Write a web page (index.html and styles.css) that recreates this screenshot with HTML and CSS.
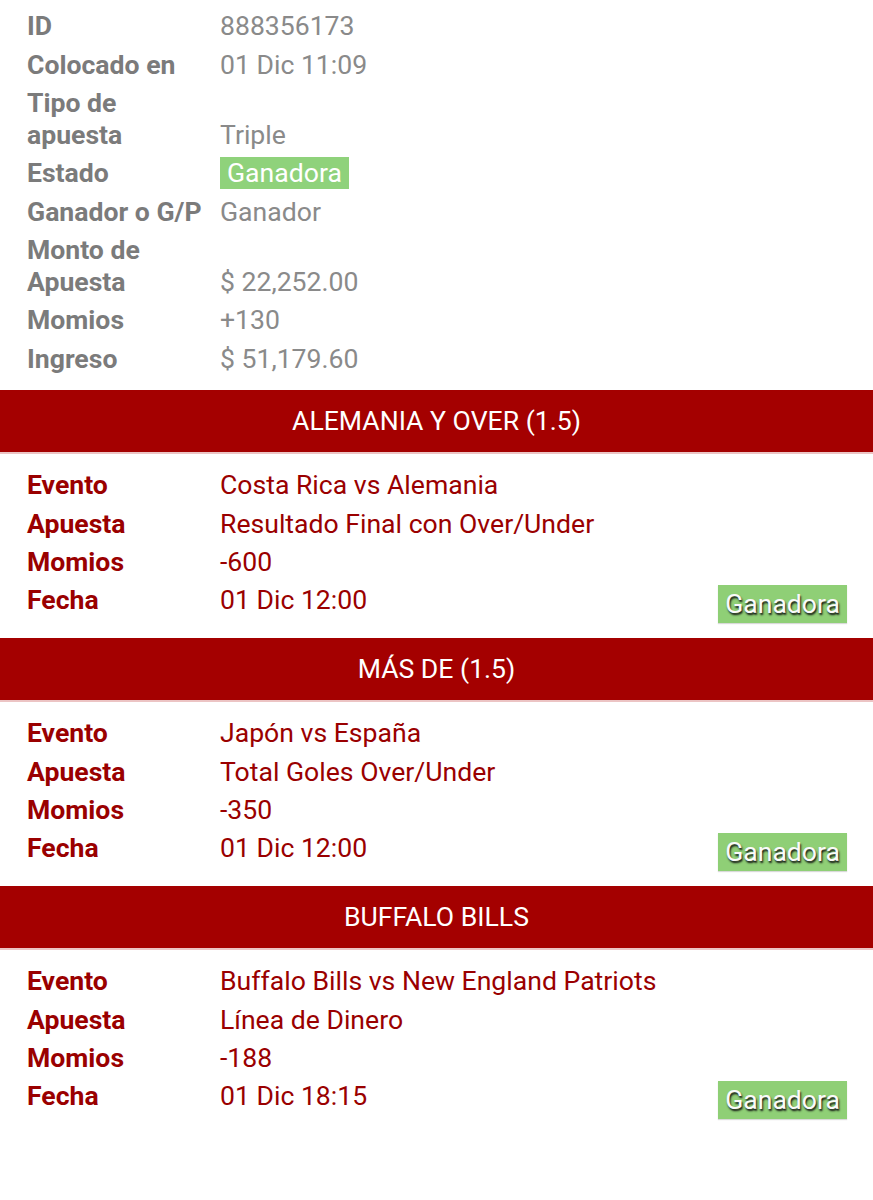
FILE: index.html
```html
<!DOCTYPE html>
<html lang="es">
<head>
    <meta charset="UTF-8">
    <meta name="viewport" content="width=device-width, initial-scale=1.0">
    <title>Detalle de Apuesta</title>
    <link rel="stylesheet" href="styles.css">
</head>
<body>

    <!-- Resumen de la apuesta -->
    <div class="resumen">
        <table class="detalle">
            <tr><td class="label">ID</td><td>888356173</td></tr>
            <tr><td class="label">Colocado en</td><td>01 Dic 11:09</td></tr>
            <tr><td class="label">Tipo de apuesta</td><td>Triple</td></tr>
            <tr><td class="label">Estado</td><td><span class="estado">Ganadora</span></td></tr>
            <tr><td class="label">Ganador o G/P</td><td>Ganador</td></tr>
            <tr><td class="label">Monto de Apuesta</td><td>$ 22,252.00</td></tr>
            <tr><td class="label">Momios</td><td>+130</td></tr>
            <tr><td class="label">Ingreso</td><td>$ 51,179.60</td></tr>
        </table>
    </div>

    <!-- Selecciones -->
    <div class="seleccion">
        <div class="seleccion-titulo">ALEMANIA Y OVER (1.5)</div>
        <div class="seleccion-cuerpo">
            <table class="detalle rojo">
                <tr><td class="label">Evento</td><td>Costa Rica vs Alemania</td></tr>
                <tr><td class="label">Apuesta</td><td>Resultado Final con Over/Under</td></tr>
                <tr><td class="label">Momios</td><td>-600</td></tr>
                <tr><td class="label">Fecha</td><td>01 Dic 12:00</td></tr>
            </table>
            <span class="resultado">Ganadora</span>
        </div>
    </div>

    <div class="seleccion">
        <div class="seleccion-titulo">MÁS DE (1.5)</div>
        <div class="seleccion-cuerpo">
            <table class="detalle rojo">
                <tr><td class="label">Evento</td><td>Japón vs España</td></tr>
                <tr><td class="label">Apuesta</td><td>Total Goles Over/Under</td></tr>
                <tr><td class="label">Momios</td><td>-350</td></tr>
                <tr><td class="label">Fecha</td><td>01 Dic 12:00</td></tr>
            </table>
            <span class="resultado">Ganadora</span>
        </div>
    </div>

    <div class="seleccion">
        <div class="seleccion-titulo">BUFFALO BILLS</div>
        <div class="seleccion-cuerpo">
            <table class="detalle rojo">
                <tr><td class="label">Evento</td><td>Buffalo Bills vs New England Patriots</td></tr>
                <tr><td class="label">Apuesta</td><td>Línea de Dinero</td></tr>
                <tr><td class="label">Momios</td><td>-188</td></tr>
                <tr><td class="label">Fecha</td><td>01 Dic 18:15</td></tr>
            </table>
            <span class="resultado">Ganadora</span>
        </div>
    </div>

</body>
</html>
```
FILE: styles.css
```css
body {
    font-family: Roboto, "Liberation Sans", Arial, sans-serif;
    font-size: 26.6px;
    margin: 0;
    background-color: #fff;
    color: #8a8a8a;
}

.resumen {
    padding: 7px 27px 12px 27px;
}

.detalle {
    border-collapse: collapse;
}

.detalle td {
    padding: 3.2px 0;
    line-height: 32px;
    vertical-align: bottom;
}

.detalle td.label {
    width: 180px;
    padding-right: 13px;
    font-weight: bold;
    color: #7b7b7b;
}

.estado {
    display: inline-block;
    padding: 0 7px;
    background-color: #8fd27b;
    color: #fff;
}

.seleccion-titulo {
    height: 62px;
    line-height: 62px;
    text-align: center;
    color: #fff;
    background-color: #a40000;
    border-bottom: 2px solid #ecc4c4;
}

.seleccion-cuerpo {
    display: flex;
    justify-content: space-between;
    align-items: flex-end;
    padding: 12px 26px 18.5px 27px;
}

.detalle.rojo td,
.detalle.rojo td.label {
    color: #9a0000;
}

.resultado {
    display: inline-block;
    margin-bottom: -3px;
    padding: 0 7px;
    line-height: 38px;
    background-color: #8fcf76;
    color: #fafafa;
    text-shadow: 1px 2px 2px #111;
    box-shadow: 0 1px 1px rgba(0, 0, 0, 0.15);
}
```
